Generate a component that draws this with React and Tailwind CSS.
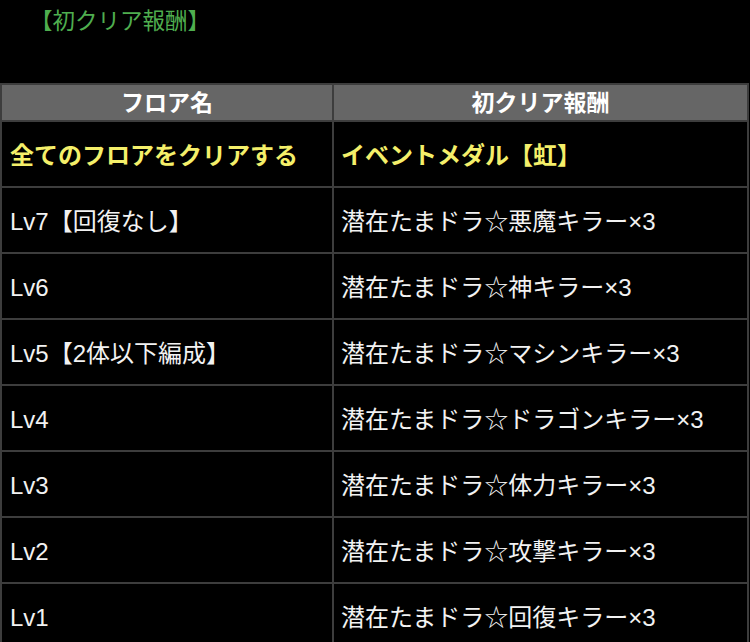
import React from 'react';

const ROWS = [
  { floor: 'Lv7【回復なし】', reward: '潜在たまドラ☆悪魔キラー×3' },
  { floor: 'Lv6', reward: '潜在たまドラ☆神キラー×3' },
  { floor: 'Lv5【2体以下編成】', reward: '潜在たまドラ☆マシンキラー×3' },
  { floor: 'Lv4', reward: '潜在たまドラ☆ドラゴンキラー×3' },
  { floor: 'Lv3', reward: '潜在たまドラ☆体力キラー×3' },
  { floor: 'Lv2', reward: '潜在たまドラ☆攻撃キラー×3' },
  { floor: 'Lv1', reward: '潜在たまドラ☆回復キラー×3' },
];

const FONT = "font-['Liberation_Sans','Noto_Sans_CJK_JP',sans-serif]";
const CELL = 'h-[66px] border-2 border-[#3d3d3d] pt-[4px] text-[24px] leading-none';

const App = () => {
  return (
    <div className={`min-h-[642px] w-[750px] overflow-hidden bg-black ${FONT}`}>
      <div className="h-[83px] pl-[30px] pt-[6px] text-[22.5px] leading-[32px] text-[#4fae4f]">
        【初クリア報酬】
      </div>

      <table className="w-[749px] table-fixed border-collapse border-2 border-[#3d3d3d]">
        <colgroup>
          <col className="w-[332px]" />
          <col />
        </colgroup>
        <thead>
          <tr className="bg-[#666666]">
            <th className="h-[37px] border-2 border-[#3d3d3d] p-0 pt-[2px] text-center text-[23px] font-bold leading-none text-white">
              フロア名
            </th>
            <th className="h-[37px] border-2 border-[#3d3d3d] p-0 pt-[2px] text-center text-[23px] font-bold leading-none text-white">
              初クリア報酬
            </th>
          </tr>
        </thead>
        <tbody>
          <tr>
            <td className={`${CELL} pl-[8px] font-bold text-[#f4ef6a]`}>全てのフロアをクリアする</td>
            <td className={`${CELL} pl-[7px] font-bold text-[#f4ef6a]`}>イベントメダル【虹】</td>
          </tr>
          {ROWS.map((row) => (
            <tr key={row.floor}>
              <td className={`${CELL} pl-[8px] text-[#f2f2f2]`}>{row.floor}</td>
              <td className={`${CELL} pl-[7px] text-[#f2f2f2]`}>{row.reward}</td>
            </tr>
          ))}
        </tbody>
      </table>
    </div>
  );
};

export default App;
